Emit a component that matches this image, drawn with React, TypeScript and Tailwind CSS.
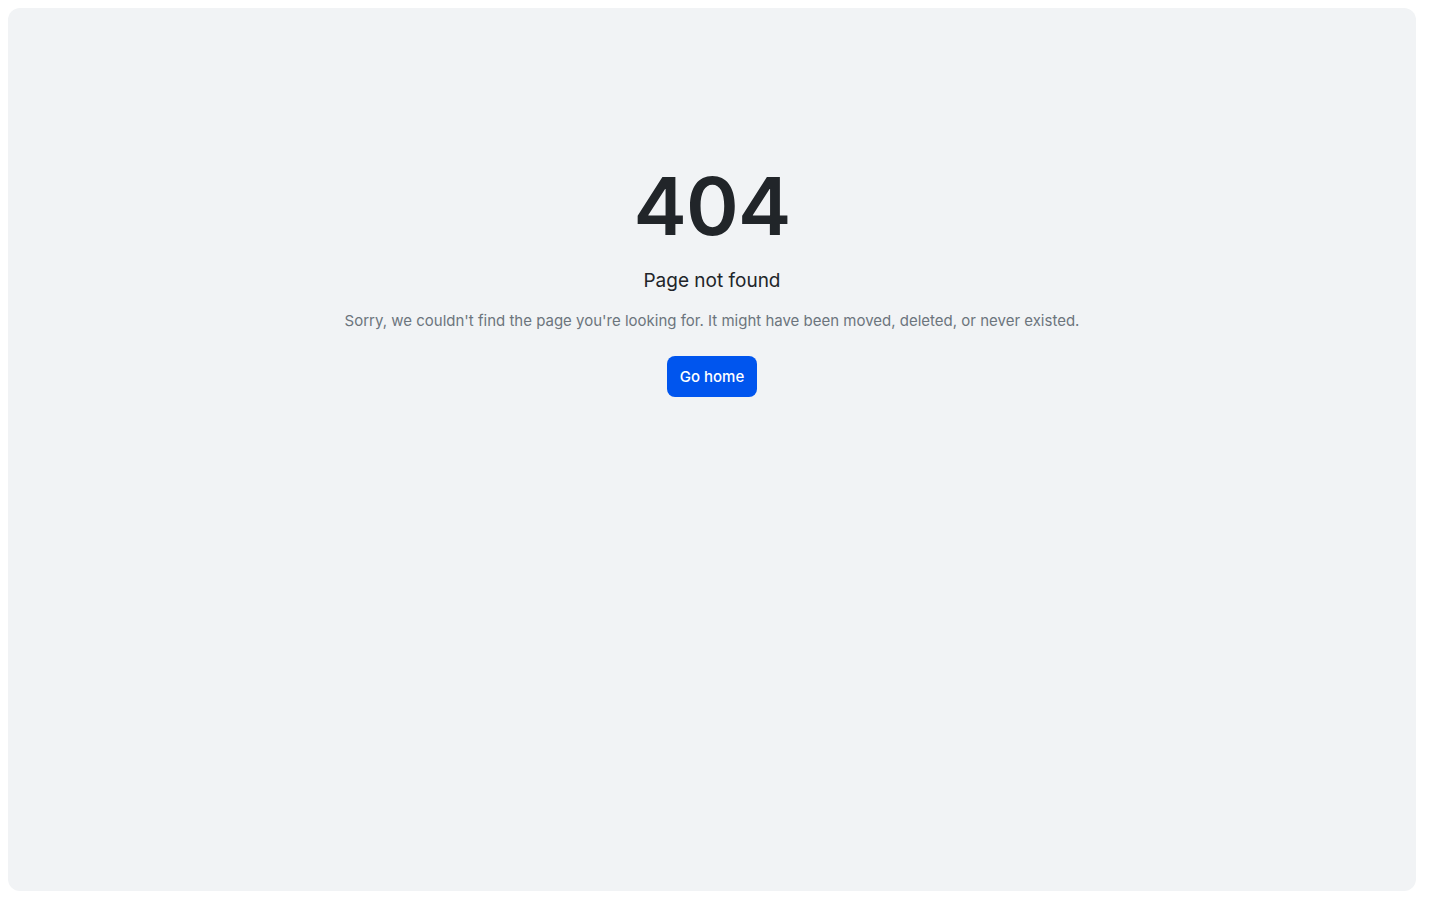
export default function App() {
  return (
    <div className="min-h-screen bg-white p-2 font-['Inter',sans-serif]">
      <div className="flex h-[883px] w-[1408px] flex-col items-center rounded-xl bg-[#f1f3f5] pt-[150px] text-center">
        <h1 className="text-[80px] font-semibold leading-[96px] tracking-[-0.01em] text-[#212529]">404</h1>
        <h2 className="mt-[13px] text-[19px] font-normal leading-[28px] text-[#212529]">Page not found</h2>
        <p className="mt-[14px] text-[15px] leading-[24px] text-[#6c757d]">
          Sorry, we couldn't find the page you're looking for. It might have been moved, deleted, or never existed.
        </p>
        <a href="/" className="mt-[23px] rounded-lg bg-[#0055ee] px-[13px] py-[10px] text-[15px] font-medium leading-[21px] text-white">
          Go home
        </a>
      </div>
    </div>
  );
}
